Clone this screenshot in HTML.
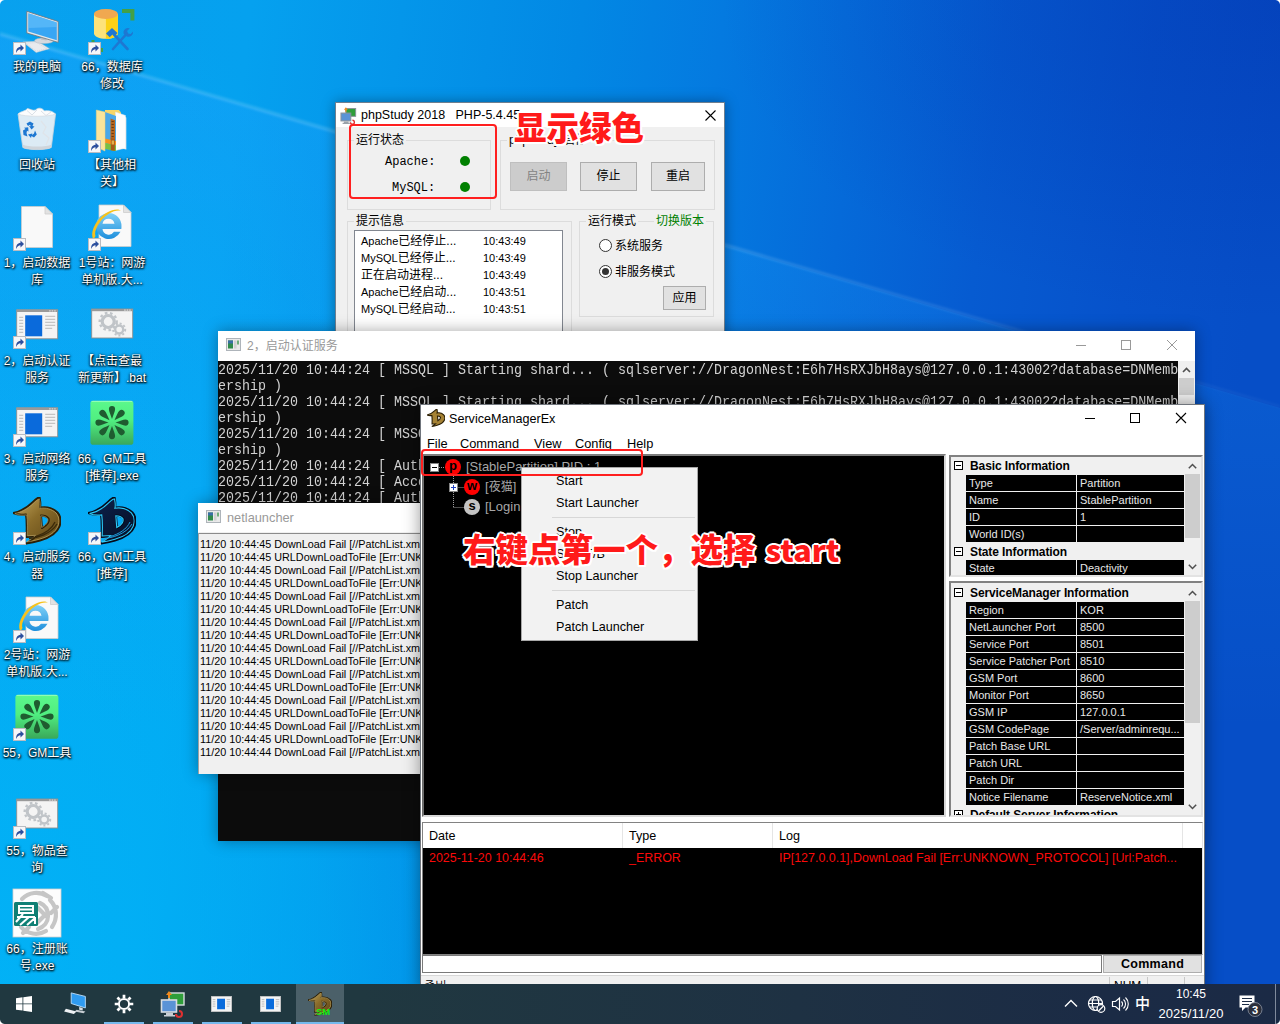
<!DOCTYPE html>
<html lang="zh-CN">
<head>
<meta charset="utf-8">
<title>Desktop</title>
<style>
*{box-sizing:border-box;margin:0;padding:0}
html,body{width:1280px;height:1024px;overflow:hidden}
body{position:relative;font-family:"Liberation Sans","Noto Sans CJK SC",sans-serif;font-size:12px;color:#000;background:#0078d7}
.abs{position:absolute}
#desk{position:absolute;left:0;top:0;width:1280px;height:1024px;overflow:hidden;
background:
radial-gradient(ellipse 560px 320px at 100% 0%,rgba(2,48,170,.38),rgba(2,48,170,0) 100%),
radial-gradient(ellipse 640px 1250px at 0% 100%,rgba(0,182,248,.8),rgba(0,182,248,.45) 50%,rgba(0,182,248,0) 85%),
linear-gradient(97deg,#08a0ee 0px,#05a1ef 250px,#0496ea 400px,#0288e4 580px,#047ae0 720px,#056ad9 860px,#065bd1 1000px,#0652cb 1150px,#064ec7 1280px);}
#desk .ray{position:absolute;left:0;top:0;width:1280px;height:1024px}
/* desktop icons */
.ico{position:absolute;width:76px;height:96px}
.ico svg{position:absolute;left:14px;top:0;width:48px;height:48px;overflow:visible}
.ico .lb{position:absolute;left:-6px;width:88px;top:52px;text-align:center;color:#fff;font-size:12px;line-height:17px;
font-family:"Liberation Sans","Noto Sans CJK SC",sans-serif;
text-shadow:0 1px 2px rgba(0,0,0,.95),1px 1px 2px rgba(0,0,0,.8),0 0 3px rgba(0,0,0,.7);white-space:nowrap}
/* taskbar */
#tb{position:absolute;left:0;top:984px;width:1280px;height:40px;background:linear-gradient(to right,#203840 0,#203840 360px,#1e3143 800px,#1b2b45 1100px,#1b2a45 1280px)}
#tb .act{position:absolute;left:296px;top:0;width:48px;height:40px;background:#4b6069}
#tb .ul{position:absolute;top:38px;height:2px;background:#76b9ed}
#tb .tray{color:#fff;font-size:12px;position:absolute}
/* windows generic */
.win{position:absolute;background:#fff}
.ttl{position:absolute;font-size:12px;white-space:nowrap}
.bigred{font-family:"Noto Sans CJK SC","Liberation Sans",sans-serif;font-weight:900;color:#ff1a1a;white-space:nowrap;-webkit-text-stroke:0;text-shadow:-2px 0 0 #fff,2px 0 0 #fff,0 -2px 0 #fff,0 2px 0 #fff,-1.500px -1.500px 0 #fff,1.500px -1.500px 0 #fff,-1.500px 1.500px 0 #fff,1.500px 1.500px 0 #fff}
.mono{font-family:"Liberation Mono","Noto Sans Mono CJK SC",monospace}
</style>
</head>
<body>
<div id="desk">
<svg class="ray" viewBox="0 0 1280 1024">
<defs><filter id="bl" x="-5%" y="-5%" width="110%" height="110%"><feGaussianBlur stdDeviation="1.200"/></filter>
<linearGradient id="rg1" x1="0" y1="0" x2="1" y2="0"><stop offset="0" stop-color="#bfe9ff" stop-opacity=".2"/><stop offset=".5" stop-color="#bfe9ff" stop-opacity=".2"/><stop offset="1" stop-color="#bfe9ff" stop-opacity=".04"/></linearGradient>
<linearGradient id="rg2" x1="0" y1="0" x2="0" y2="1"><stop offset="0" stop-color="#1ea0ff" stop-opacity=".36"/><stop offset=".25" stop-color="#1ea0ff" stop-opacity=".2"/><stop offset=".7" stop-color="#1ea0ff" stop-opacity="0"/></linearGradient></defs>
<polygon points="0,34 1280,408 1280,1024 0,1024" fill="url(#rg2)"/>
<polygon points="0,32 1280,405 1280,408 0,36" fill="url(#rg1)" filter="url(#bl)"/>
</svg>
</div>
<!--ICONS-->
<svg width="0" height="0" style="position:absolute">
<defs>
<symbol id="sc" viewBox="0 0 13 13"><rect x=".5" y=".5" width="12" height="12" fill="#f6f7f9" stroke="#b9bcc2"/><path d="M3.300 11c-.6-3.200 1-6 4.200-6.300V2.600L11 6 7.500 9.400V7.300C5.600 7.300 4.200 8.600 3.300 11z" fill="#2c4f9e"/></symbol>
<symbol id="pc" viewBox="0 0 48 48"><path d="M10 35 24.500 34.300 36.400 41.700 23.200 45.500z" fill="#e9ebee" stroke="#c4c8cd" stroke-width=".5"/><path d="M12.500 36.200 24 35.600 33.800 41.600 23.300 44.200z" fill="none" stroke="#cfd3d8" stroke-width=".7" stroke-dasharray="1.200 .8"/><ellipse cx="31" cy="33.800" rx="9.500" ry="2.800" fill="#d5d9de" stroke="#b4b9bf" stroke-width=".5"/><path d="M28 28 33.500 29.800 33.500 33.600 28 32.500z" fill="#b9bec5"/><path d="M13.800 4.300 45.200 14.500 45.200 35.400 13.800 26z" fill="#e4e7ea" stroke="#6d7278" stroke-width=".8"/><path d="M15.300 6.300 43.800 15.600 43.800 33.300 15.300 24.600z" fill="#38a6f4"/><path d="M15.300 6.300 43.800 15.600 43.800 20 15.300 21z" fill="#6cc2fb" opacity=".55"/></symbol>
<symbol id="page" viewBox="0 0 48 48"><path d="M8.500 3.500H32L39.500 11V44.500H8.500z" fill="#f9f9f9" stroke="#cdcdcd" stroke-width=".8"/><path d="M32 3.500V11H39.500z" fill="#e2e2e2" stroke="#cdcdcd" stroke-width=".8"/></symbol>
<symbol id="ie" viewBox="0 0 48 48"><path d="M11 2H35.500L43 9.500V43.500H11z" fill="#f9f9f9" stroke="#cdcdcd" stroke-width=".8"/><path d="M35.500 2V9.500H43z" fill="#e2e2e2" stroke="#cdcdcd" stroke-width=".8"/><defs><linearGradient id="ieg" x1="0" y1="0" x2="0" y2="1"><stop offset="0" stop-color="#7fd0f7"/><stop offset="1" stop-color="#1f8fdc"/></linearGradient></defs><path d="M20.500 10a13 13 0 0 1 13 13.800c0 .9-.1 1.700-.2 2.200H14.500a6.300 6.300 0 0 0 11.500 2.800h6.500A13 13 0 1 1 20.500 10zm0 5.800a6.300 6.300 0 0 0-6 5h12a6.300 6.300 0 0 0-6-5z" fill="url(#ieg)"/><path d="M5.500 36.500C1.500 29 8 16 19 9.500c6-3.500 12-4 14.500-1.500-3-1-8-.2-13 3C11 17 5.500 28.500 7.500 33z" fill="#f7c21c"/></symbol>
<symbol id="bat" viewBox="0 0 48 48"><g transform="translate(-.8 2.300)"><rect x="4.500" y="6.500" width="41" height="29" fill="#f4f4f4" stroke="#8f8f8f" stroke-width=".9"/><rect x="4.500" y="6.500" width="41" height="2.200" fill="#9a9a9a"/><path d="M37 7.600h1.500M39.500 7.600H41M42 7.600h1.500" stroke="#e8e8e8" stroke-width="1"/><rect x="13" y="12" width="17" height="21" fill="#0a6adb"/><path d="M7 14h4M7 17h4M7 20h4M7 23h4M7 26h4M7 29h4M33 13h10M33 16h10M33 19h10M33 22h10M33 25h7" stroke="#b9b9b9" stroke-width="1"/></g></symbol>
<symbol id="gears" viewBox="0 0 48 48"><g transform="translate(-.8 2.500)"><rect x="4.500" y="5.500" width="41" height="29" fill="#f4f4f4" stroke="#8f8f8f" stroke-width=".9"/><rect x="4.500" y="5.500" width="41" height="2.200" fill="#9a9a9a"/><path d="M37 6.600h1.500M39.500 6.600H41M42 6.600h1.500" stroke="#e8e8e8" stroke-width="1"/><circle cx="21" cy="18" r="6" fill="none" stroke="#c0c4c8" stroke-width="3.200"/><circle cx="21" cy="18" r="8.500" fill="none" stroke="#c0c4c8" stroke-width="2.400" stroke-dasharray="2.600 2.600"/><circle cx="32" cy="26" r="4" fill="none" stroke="#c0c4c8" stroke-width="2.400"/><circle cx="32" cy="26" r="6" fill="none" stroke="#c0c4c8" stroke-width="2" stroke-dasharray="2 2"/></g></symbol>
<symbol id="icq" viewBox="0 0 48 48"><defs><linearGradient id="gq" x1="0" y1="0" x2="0" y2="1"><stop offset="0" stop-color="#5cf88c"/><stop offset=".45" stop-color="#50ee80"/><stop offset="1" stop-color="#3aa85a"/></linearGradient></defs><rect x="2.400" y="1.700" width="43" height="44" rx="2.800" fill="url(#gq)"/><rect x="3.500" y="1.900" width="40.800" height="1" fill="#a8ffc4" opacity=".8"/><g fill="#1f5c30" transform="translate(24 23.600)"><path d="M0-3.500C-1.400-8-3.100-11-3.100-13.500A3.100 3.100 0 0 1 3.100-13.500C3.100-11 1.400-8 0-3.500Z" transform="rotate(0)"/><path d="M0-3.500C-1.400-8-3.100-11-3.100-13.500A3.100 3.100 0 0 1 3.100-13.500C3.100-11 1.400-8 0-3.500Z" transform="rotate(45)"/><path d="M0-3.500C-1.400-8-3.100-11-3.100-13.500A3.100 3.100 0 0 1 3.100-13.500C3.100-11 1.400-8 0-3.500Z" transform="rotate(90)"/><path d="M0-3.500C-1.400-8-3.100-11-3.100-13.500A3.100 3.100 0 0 1 3.100-13.500C3.100-11 1.400-8 0-3.500Z" transform="rotate(135)"/><path d="M0-3.500C-1.400-8-3.100-11-3.100-13.500A3.100 3.100 0 0 1 3.100-13.500C3.100-11 1.400-8 0-3.500Z" transform="rotate(180)"/><path d="M0-3.500C-1.400-8-3.100-11-3.100-13.500A3.100 3.100 0 0 1 3.100-13.500C3.100-11 1.400-8 0-3.500Z" transform="rotate(225)"/><path d="M0-3.500C-1.400-8-3.100-11-3.100-13.500A3.100 3.100 0 0 1 3.100-13.500C3.100-11 1.400-8 0-3.500Z" transform="rotate(270)"/><path d="M0-3.500C-1.400-8-3.100-11-3.100-13.500A3.100 3.100 0 0 1 3.100-13.500C3.100-11 1.400-8 0-3.500Z" transform="rotate(315)"/></g></symbol>
<symbol id="drg" viewBox="0 0 48 48"><path fill-rule="evenodd" d="M0 16C6 15 14 11 20 5 22 3 24.500 1 26.500 0 27 3 28 7 27 10.500 33 9.500 40 11 44.500 15.500 47.500 19 48.500 24 46.500 29.500 44 36 36 41 27 43.500 22 45 17 46 13 46.500 17 44 20 42 22.500 39.500L13.500 40C13.800 33 14 24 13 17.500 9 18 4 18 0 16ZM28 18.500C31 18.500 34 19.500 35.500 21.500 36.500 24 35 28 29 31Z"/></symbol>
<symbol id="drgl" viewBox="0 0 48 48"><path fill="none" d="M22.500 39.500C31 37 39 32 42 25M16 41.500C24 41 38 37 44 27"/></symbol>
<linearGradient id="gold" x1="0" y1="0" x2="1" y2="1"><stop offset="0" stop-color="#c8ab62"/><stop offset=".45" stop-color="#8a6c2a"/><stop offset="1" stop-color="#5a4214"/></linearGradient>
<linearGradient id="navy" x1="0" y1="0" x2="1" y2="1"><stop offset="0" stop-color="#0c2450"/><stop offset="1" stop-color="#060d22"/></linearGradient>
</defs>
</svg>
<!-- col1 x=-1 (center 37) ; col2 x=74 (center 112); row top = 7+98*i -->
<div class="ico" style="left:-1px;top:7px"><svg viewBox="0 0 48 48"><use href="#pc"/><use href="#sc" x="0" y="35" width="13" height="13"/></svg><div class="lb">我的电脑</div></div>
<div class="ico" style="left:74px;top:7px"><svg viewBox="0 0 48 48"><path d="M34 2h12.400v11.600h-4V6H34z" fill="#43a047"/><path d="M6 7v19.500c0 3 5.300 5.300 11.900 5.300s11.900-2.300 11.900-5.300V7z" fill="#fde27a"/><path d="M17.900 7v24.800c6.600 0 11.900-2.300 11.900-5.300V7z" fill="#fcd116"/><ellipse cx="17.900" cy="7" rx="11.900" ry="5" fill="#f0a850"/><g stroke="#1e78d2" stroke-linecap="round" fill="none"><path d="M25 42 37.500 28" stroke-width="2.600"/><path d="M39.500 42 26 27.500" stroke-width="2.600"/></g><path d="M18 26.500l6-5.500 5.500 5-3 3.200-2-1.600-2.800 2.600z" fill="#1e78d2"/><path d="M35.500 26.500a4.600 4.600 0 0 1 6.300-5.200l-2.700 2.800 1 2.300 2.500.6 2.400-2.600a4.600 4.600 0 0 1-6.200 5.100z" fill="#1e78d2"/><rect x="3.500" y="33" width="3" height="3" fill="#43a047"/><rect x="12.500" y="41" width="2.500" height="4" fill="#43a047"/><use href="#sc" x="0" y="35" width="13" height="13"/></svg><div class="lb">66，数据库<br>修改</div></div>
<div class="ico" style="left:-1px;top:105px"><svg viewBox="0 0 48 48"><path d="M5 9 42.600 9 38.300 42.500c-4 2.800-24 2.800-28.500 0z" fill="#eef1f4" fill-opacity=".92" stroke="#c9d3dc" stroke-width=".8"/><path d="M5 9c3-3 7-2.500 9.500-5.500 3 .5 5 2.500 8 1.500 3-3 7-2 9 1 4-1 8 0 11 3-6 3-31 3-37.500 0z" fill="#fbfcfd" stroke="#d5dbe1" stroke-width=".7"/><path d="M14 5.500 19 10 24 5M28 6 33 10.500 38 7" fill="none" stroke="#d7dde3" stroke-width=".9"/><path d="M9.800 39.500c4.500 2.800 24.500 2.800 28.500 0l-.4 3c-4 2.800-23.700 2.800-27.700 0z" fill="#cfd5db"/><path d="M28 16 33 22 30 28 36 33 33 40" fill="none" stroke="#dfe4e9" stroke-width="1.200"/><g fill="#1e78d2"><path d="M13.500 18.500 17 16.500 20.500 18.500 19.500 21 21.500 21.500 18.500 24.500 16 21 17.800 21.200 17 19.800 15 21z"/><path d="M22 25.500 23.800 29.500 21 32.500 18.500 31 18 33 15 29.500 19.300 28.500 19.200 30 21 28.500z" /><path d="M14.500 31.500 10.500 30 10 25.500 12.500 24 11 22.800 15.200 22.300 15.500 26.500 14 25.800 13.500 28z"/></g></svg><div class="lb">回收站</div></div>
<div class="ico" style="left:74px;top:105px"><svg viewBox="0 0 48 48"><path d="M17 5h14l2 2.500h0V12H17z" fill="#f7d567"/><path d="M31.500 10 38.300 12.500V44.500L31.500 43z" fill="#f2f2f2"/><path d="M27.500 7 37.500 10.500V43L27.500 45.500z" fill="#fdfdfd" stroke="#e6e6e6" stroke-width=".5"/><path d="M17 7 28 11V46L17 44z" fill="#4aa8e8"/><path d="M22.500 13.500 27 15.200V46L22.500 45.200z" fill="#b5651d"/><path d="M23.500 16.500h2.300M23.500 19.500h2.300M23.500 22.500h2.300M23.500 25.500h2.300M23.500 28.500h2.300M23.500 31.500h2.300" stroke="#6b3a0e" stroke-width="1.200"/><path d="M17 33.500 28 36v4.500L17 38z" fill="#f5921e"/><path d="M17 38 28 40.500V46L17 44z" fill="#7ac043"/><path d="M22.800 33 26.800 34V45.800L22.800 45z" fill="#a85a18"/><rect x="23.600" y="35.500" width="2.400" height="4" fill="#e2b04a"/><path d="M8.300 5 17 7V46L8.300 42z" fill="#fbe49a" stroke="#efd27a" stroke-width=".5"/><use href="#sc" x="0" y="35" width="13" height="13"/></svg><div class="lb">【其他相<br>关】</div></div>
<div class="ico" style="left:-1px;top:203px"><svg viewBox="0 0 48 48"><use href="#page"/><use href="#sc" x="0" y="35" width="13" height="13"/></svg><div class="lb">1，启动数据<br>库</div></div>
<div class="ico" style="left:74px;top:203px"><svg viewBox="0 0 48 48"><use href="#ie"/><use href="#sc" x="0" y="35" width="13" height="13"/></svg><div class="lb">1号站：网游<br>单机版.大...</div></div>
<div class="ico" style="left:-1px;top:301px"><svg viewBox="0 0 48 48"><use href="#bat"/><use href="#sc" x="0" y="35" width="13" height="13"/></svg><div class="lb">2，启动认证<br>服务</div></div>
<div class="ico" style="left:74px;top:301px"><svg viewBox="0 0 48 48"><use href="#gears"/></svg><div class="lb">【点击查最<br>新更新】.bat</div></div>
<div class="ico" style="left:-1px;top:399px"><svg viewBox="0 0 48 48"><use href="#bat"/><use href="#sc" x="0" y="35" width="13" height="13"/></svg><div class="lb">3，启动网络<br>服务</div></div>
<div class="ico" style="left:74px;top:399px"><svg viewBox="0 0 48 48"><use href="#icq"/></svg><div class="lb">66，GM工具<br>[推荐].exe</div></div>
<div class="ico" style="left:-1px;top:497px"><svg viewBox="0 0 48 48"><use href="#drg" fill="url(#gold)" stroke="#2c1f06" stroke-width="2" stroke-linejoin="round"/><use href="#drg" fill="none" stroke="#e0c680" stroke-width=".7" opacity=".8" transform="translate(1.700 1.600) scale(.93)"/><use href="#drgl" stroke="#3a2a0a" stroke-width="1.300"/><use href="#sc" x="0" y="35" width="13" height="13"/></svg><div class="lb">4，启动服务<br>器</div></div>
<div class="ico" style="left:74px;top:497px"><svg viewBox="0 0 48 48"><use href="#drg" fill="url(#navy)" stroke="#050a1a" stroke-width="2" stroke-linejoin="round"/><use href="#drg" fill="none" stroke="#2cc8f6" stroke-width="1.200" transform="translate(1.500 1.400) scale(.94)"/><use href="#drgl" stroke="#1f9fe0" stroke-width="1"/><use href="#sc" x="0" y="35" width="13" height="13"/></svg><div class="lb">66，GM工具<br>[推荐]</div></div>
<div class="ico" style="left:-1px;top:595px"><svg viewBox="0 0 48 48"><use href="#ie" x="2"/><use href="#sc" x="0" y="35" width="13" height="13"/></svg><div class="lb">2号站：网游<br>单机版.大...</div></div>
<div class="ico" style="left:-1px;top:693px"><svg viewBox="0 0 48 48"><use href="#icq"/><use href="#sc" x="0" y="35" width="13" height="13"/></svg><div class="lb">55，GM工具</div></div>
<div class="ico" style="left:-1px;top:791px"><svg viewBox="0 0 48 48"><use href="#gears"/><use href="#sc" x="0" y="35" width="13" height="13"/></svg><div class="lb">55，物品查<br>询</div></div>
<div class="ico" style="left:-1px;top:889px"><svg viewBox="0 0 48 48"><rect x="0" y="0" width="48" height="48" fill="#fdfdfd" stroke="#d0d0d0" stroke-width=".8"/><g fill="none" stroke="#c6c6c6" stroke-width="4.200" stroke-linecap="round"><path d="M9 10c7-7 17-8 25-3M30 4l8 5M37 11c7 7 8 18 2 27M44 18l-6 6M33 42c-8 5-19 3-25-4M10 44l6-6M27 14c5 2 8 7 8 13s-4 11-10 13M24 18l8 8-8 8"/></g><rect x="1" y="13" width="24" height="24" rx="1.500" fill="#0f7f74"/><g stroke="#fff" stroke-width="2" fill="none"><path d="M6 17h14v7H6zM6 20.500h14M4 28h18M10 25 3 33M16 28 7 36M22 29 14 36M22 28v7"/></g></svg><div class="lb">66，注册账<br>号.exe</div></div>
<!--/ICONS-->
<!--PHPSTUDY-->
<style>
#php{left:335px;top:102px;width:390px;height:240px;background:#f0f0f0;border:1px solid #6f7f8f;box-shadow:0 0 12px rgba(0,0,0,.35)}
#php .tbar{position:absolute;left:0;top:0;width:388px;height:24px;background:#fff}
#php .gb{position:absolute;border:1px solid #dcdcdc}
#php .gl{position:absolute;background:#f0f0f0;padding:0 2px;font-size:12px;line-height:14px;white-space:nowrap}
#php .btn{position:absolute;background:#e1e1e1;border:1px solid #adadad;text-align:center;font-size:12px}
#php .t{position:absolute;white-space:nowrap;font-size:12px;line-height:14px}
#php .sm{font-family:"Liberation Sans","Noto Sans CJK SC",sans-serif;font-size:12px}
#php .sm i{font-style:normal;font-size:11px}
.song{font-family:"Liberation Mono","Noto Serif CJK SC",monospace}
</style>
<div class="win" id="php">
<div class="tbar"></div>
<svg class="abs" style="left:4px;top:4px" width="17" height="18" viewBox="0 0 26 27"><rect x="9" y="2" width="15" height="12" fill="#2f9e3a" stroke="#8a9299" stroke-width="1.400"/><rect x="1.500" y="9" width="15" height="12" fill="#5a93d6" stroke="#8a9299" stroke-width="1.600"/><path d="M6 22h7v2H6zM4 24h11v1.600H4z" fill="#9aa2a9"/><path d="M9 0l-3 4h2v3h2V4h2z" fill="#f08a1c"/><path d="M19 19a4 4 0 1 1-4 4h2a2 2 0 1 0 2-2z" fill="#e03030"/></svg>
<div class="ttl" style="left:25px;top:5px;line-height:15px;font-size:12.500px;white-space:pre">phpStudy 2018   PHP-5.4.45</div>
<svg class="abs" style="left:369px;top:7px" width="11" height="11" viewBox="0 0 11 11"><path d="M.5.5l10 10M10.500.5l-10 10" stroke="#000" stroke-width="1.100"/></svg>
<!-- group 1 -->
<div class="gb" style="left:11px;top:37px;width:144px;height:70px"></div>
<div class="gl" style="left:18px;top:30px">运行状态</div>
<div class="t song" style="left:49px;top:52px">Apache:</div>
<div class="t song" style="left:56px;top:78px">MySQL:</div>
<div class="abs" style="left:124px;top:53px;width:10px;height:10px;border-radius:50%;background:#008000"></div>
<div class="abs" style="left:124px;top:79px;width:10px;height:10px;border-radius:50%;background:#008000"></div>
<!-- group 2 -->
<div class="gb" style="left:164px;top:37px;width:215px;height:70px"></div>
<div class="gl" style="left:171px;top:30px">phpStudy 启停</div>
<div class="btn" style="left:174px;top:59px;width:57px;height:29px;line-height:27px;background:#cccccc;border-color:#bfbfbf;color:#838383">启动</div>
<div class="btn" style="left:244px;top:59px;width:57px;height:29px;line-height:27px">停止</div>
<div class="btn" style="left:315px;top:59px;width:54px;height:29px;line-height:27px">重启</div>
<!-- group 3 -->
<div class="gb" style="left:11px;top:118px;width:225px;height:130px"></div>
<div class="gl" style="left:18px;top:111px">提示信息</div>
<div class="abs" style="left:18px;top:127px;width:209px;height:120px;background:#fff;border:1px solid #828790"></div>
<div class="t sm" style="left:25px;top:131px"><i>Apache</i>已经停止...</div><div class="t sm" style="left:147px;top:131px"><i>10:43:49</i></div>
<div class="t sm" style="left:25px;top:148px"><i>MySQL</i>已经停止...</div><div class="t sm" style="left:147px;top:148px"><i>10:43:49</i></div>
<div class="t sm" style="left:25px;top:165px">正在启动进程...</div><div class="t sm" style="left:147px;top:165px"><i>10:43:49</i></div>
<div class="t sm" style="left:25px;top:182px"><i>Apache</i>已经启动...</div><div class="t sm" style="left:147px;top:182px"><i>10:43:51</i></div>
<div class="t sm" style="left:25px;top:199px"><i>MySQL</i>已经启动...</div><div class="t sm" style="left:147px;top:199px"><i>10:43:51</i></div>
<!-- group 4 -->
<div class="gb" style="left:243px;top:118px;width:135px;height:96px"></div>
<div class="gl" style="left:250px;top:111px">运行模式</div>
<div class="gl" style="left:318px;top:111px;color:#008000">切换版本</div>
<div class="abs" style="left:263px;top:136px;width:13px;height:13px;border-radius:50%;border:1px solid #333;background:#fff"></div>
<div class="t" style="left:279px;top:136px">系统服务</div>
<div class="abs" style="left:263px;top:162px;width:13px;height:13px;border-radius:50%;border:1px solid #333;background:#fff"></div>
<div class="abs" style="left:266px;top:165px;width:7px;height:7px;border-radius:50%;background:#333"></div>
<div class="t" style="left:279px;top:162px">非服务模式</div>
<div class="btn" style="left:327px;top:183px;width:43px;height:24px;line-height:22px">应用</div>
<!-- annotations -->
<div class="abs" style="left:13px;top:21px;width:148px;height:75px;border:2px solid #ff1f1f;border-radius:4px"></div>
</div>
<div class="abs bigred" style="left:514px;top:104px;font-size:32.500px;line-height:44px">显示绿色</div>
<!--/PHPSTUDY-->
<!--CONSOLE-->
<style>
#con{left:218px;top:331px;width:977px;height:510px;background:#0c0c0c;box-shadow:0 0 14px rgba(0,0,0,.35)}
#con .tbar{position:absolute;left:0;top:0;width:977px;height:30px;background:#fff}
#con .ln{position:absolute;left:0;height:16px;font-size:15px;line-height:16px;white-space:pre;color:#d2d2d2;transform-origin:0 0;transform:scaleX(.88889)}
.cico{position:absolute;width:15px;height:13px}
</style>
<div class="win" id="con">
<div class="tbar"></div>
<svg class="cico" style="left:8px;top:7px" viewBox="0 0 15 13"><rect x=".5" y=".5" width="14" height="12" fill="#e9e9e9" stroke="#aeb4ba"/><rect x="2" y="2.500" width="5" height="8" fill="#2f8a4a"/><rect x="2" y="2.500" width="5" height="3" fill="#3a6ea5"/><rect x="8" y="2.500" width="2.500" height="8" fill="#d0d0d0"/><rect x="11" y="2.500" width="2" height="4" fill="#6fae7a"/></svg>
<div class="ttl" style="left:29px;top:7px;line-height:16px;color:#999">2，启动认证服务</div>
<svg class="abs" style="left:857px;top:8px" width="12" height="12" viewBox="0 0 12 12"><path d="M1 6.500h10" stroke="#999" stroke-width="1"/></svg>
<svg class="abs" style="left:902px;top:8px" width="12" height="12" viewBox="0 0 12 12"><rect x="1.500" y="1.500" width="9" height="9" fill="none" stroke="#999" stroke-width="1"/></svg>
<svg class="abs" style="left:948px;top:8px" width="12" height="12" viewBox="0 0 12 12"><path d="M1 1l10 10M11 1 1 11" stroke="#999" stroke-width="1"/></svg>
<div class="ln mono" style="top:32px">2025/11/20 10:44:24 [ MSSQL ] Starting shard... ( sqlserver://DragonNest:E6h7HsRXJbH8ays@127.0.0.1:43002?database=DNMemb</div>
<div class="ln mono" style="top:48px">ership )</div>
<div class="ln mono" style="top:64px">2025/11/20 10:44:24 [ MSSQL ] Starting shard... ( sqlserver://DragonNest:E6h7HsRXJbH8ays@127.0.0.1:43002?database=DNMemb</div>
<div class="ln mono" style="top:80px">ership )</div>
<div class="ln mono" style="top:96px">2025/11/20 10:44:24 [ MSSQL ] Starting shard... ( sqlserver://DragonNest:E6h7HsRXJbH8ays@127.0.0.1:43002?database=DNMemb</div>
<div class="ln mono" style="top:112px">ership )</div>
<div class="ln mono" style="top:128px">2025/11/20 10:44:24 [ Auth ] Authentication service ready</div>
<div class="ln mono" style="top:144px">2025/11/20 10:44:24 [ Account ] Account database connected</div>
<div class="ln mono" style="top:160px">2025/11/20 10:44:24 [ Auth ] Listening for connections</div>
<!-- scrollbar -->
<div class="abs" style="left:960px;top:30px;width:17px;height:480px;background:#f0f0f0"></div>
<svg class="abs" style="left:964px;top:35px" width="9" height="8" viewBox="0 0 9 8"><path d="M1 6 4.500 2.500 8 6" fill="none" stroke="#505050" stroke-width="1.600"/></svg>
<div class="abs" style="left:961px;top:47px;width:15px;height:17px;background:#cdcdcd"></div>
</div>
<!--/CONSOLE-->
<!--NETLAUNCHER-->
<style>
#net{left:198px;top:503px;width:231px;height:271px;background:#f0f0f0;overflow:hidden;box-shadow:0 0 14px rgba(0,0,0,.35)}
#net .tbar{position:absolute;left:0;top:0;width:230px;height:29px;background:#fff}
#net .ln{position:absolute;left:2px;font-size:10.800px;line-height:13px;white-space:pre;color:#000}
</style>
<div class="win" id="net">
<div class="tbar"></div>
<svg class="cico" style="left:8px;top:7px" viewBox="0 0 15 13"><rect x=".5" y=".5" width="14" height="12" fill="#e9e9e9" stroke="#aeb4ba"/><rect x="2" y="2.500" width="5" height="8" fill="#2f8a4a"/><rect x="2" y="2.500" width="5" height="3" fill="#3a6ea5"/><rect x="8" y="2.500" width="2.500" height="8" fill="#d0d0d0"/><rect x="11" y="2.500" width="2" height="4" fill="#6fae7a"/></svg>
<div class="ttl" style="left:29px;top:7px;line-height:16px;color:#999;font-size:12.800px">netlauncher</div>
<div class="abs" style="left:0;top:30px;width:230px;height:1px;background:#8c8c8c"></div>
<div class="abs" style="left:0;top:30px;width:1px;height:241px;background:#a0a0a0"></div>
<div class="ln" style="top:35px">11/20 10:44:45 DownLoad Fail [//PatchList.xml]</div>
<div class="ln" style="top:48px">11/20 10:44:45 URLDownLoadToFile [Err:UNKNOWN_PROTOCOL]</div>
<div class="ln" style="top:61px">11/20 10:44:45 DownLoad Fail [//PatchList.xml]</div>
<div class="ln" style="top:74px">11/20 10:44:45 URLDownLoadToFile [Err:UNKNOWN_PROTOCOL]</div>
<div class="ln" style="top:87px">11/20 10:44:45 DownLoad Fail [//PatchList.xml]</div>
<div class="ln" style="top:100px">11/20 10:44:45 URLDownLoadToFile [Err:UNKNOWN_PROTOCOL]</div>
<div class="ln" style="top:113px">11/20 10:44:45 DownLoad Fail [//PatchList.xml]</div>
<div class="ln" style="top:126px">11/20 10:44:45 URLDownLoadToFile [Err:UNKNOWN_PROTOCOL]</div>
<div class="ln" style="top:139px">11/20 10:44:45 DownLoad Fail [//PatchList.xml]</div>
<div class="ln" style="top:152px">11/20 10:44:45 URLDownLoadToFile [Err:UNKNOWN_PROTOCOL]</div>
<div class="ln" style="top:165px">11/20 10:44:45 DownLoad Fail [//PatchList.xml]</div>
<div class="ln" style="top:178px">11/20 10:44:45 URLDownLoadToFile [Err:UNKNOWN_PROTOCOL]</div>
<div class="ln" style="top:191px">11/20 10:44:45 DownLoad Fail [//PatchList.xml]</div>
<div class="ln" style="top:204px">11/20 10:44:45 URLDownLoadToFile [Err:UNKNOWN_PROTOCOL]</div>
<div class="ln" style="top:217px">11/20 10:44:45 DownLoad Fail [//PatchList.xml]</div>
<div class="ln" style="top:230px">11/20 10:44:45 URLDownLoadToFile [Err:UNKNOWN_PROTOCOL]</div>
<div class="ln" style="top:243px">11/20 10:44:44 DownLoad Fail [//PatchList.xml]</div>
</div>
<!--/NETLAUNCHER-->
<!--SMEX-->
<style>
#sm{left:420px;top:404px;width:785px;height:590px;background:#fff;box-shadow:0 0 16px rgba(0,0,0,.4);overflow:hidden}
#sm .mi{position:absolute;top:31px;font-size:12.800px;line-height:18px;white-space:nowrap}
#sm .pan{position:absolute;background:#f0f0f0;border:2px solid;border-color:#828282 #e3e3e3 #e3e3e3 #828282;overflow:hidden}
#sm .pan2{position:absolute;background:#f0f0f0;overflow:hidden}
#sm .ph{position:absolute;left:19px;height:17px;line-height:19px;font-size:12px;font-weight:700;white-space:nowrap;letter-spacing:-.1px}
#sm .pn,#sm .pv{position:absolute;height:16px;line-height:17px;font-size:11px;color:#e8e8e8;background:#000;white-space:nowrap;overflow:hidden;padding-left:3px}
#sm .pn{left:15px;width:110px}
#sm .pv{left:126px;width:107px}
#sm .sb{position:absolute;left:233px;top:0;width:17px;background:#f0f0f0}
#sm .th{position:absolute;left:234px;width:15px;background:#cdcdcd}
#sm .tr{position:absolute;font-size:13px;line-height:18px;white-space:nowrap}
#sm .cm{position:absolute;left:136px;font-size:12.600px;line-height:18px;white-space:nowrap;color:#000}
#sm .lh{position:absolute;top:421px;height:23px;line-height:23px;font-size:12.600px;white-space:nowrap}
#sm .lr{position:absolute;top:445px;line-height:18px;font-size:12.450px;color:#fa0a0a;white-space:nowrap}
</style>
<div class="win" id="sm">
<div class="abs" style="left:0;top:0;width:785px;height:590px;border:1px solid #70757c;border-bottom:0"></div>
<svg class="abs" style="left:7px;top:5px" width="18" height="18" viewBox="0 0 48 48"><use href="#drg" fill="#a58234" stroke="#2a1e05" stroke-width="3"/></svg>
<div class="ttl" style="left:29px;top:7px;line-height:17px;font-size:12.600px">ServiceManagerEx</div>
<svg class="abs" style="left:664px;top:8px" width="12" height="12" viewBox="0 0 12 12"><path d="M1 6.500h10" stroke="#000" stroke-width="1"/></svg>
<svg class="abs" style="left:709px;top:8px" width="12" height="12" viewBox="0 0 12 12"><rect x="1.500" y="1.500" width="9" height="9" fill="none" stroke="#000" stroke-width="1"/></svg>
<svg class="abs" style="left:755px;top:8px" width="12" height="12" viewBox="0 0 12 12"><path d="M1 1l10 10M11 1 1 11" stroke="#000" stroke-width="1.100"/></svg>
<div class="mi" style="left:7px">File</div><div class="mi" style="left:40px">Command</div><div class="mi" style="left:114px">View</div><div class="mi" style="left:155px">Config</div><div class="mi" style="left:207px">Help</div>
<!-- tree -->
<div class="pan" style="left:2px;top:50px;width:524px;height:363px;background:#000;border-color:#7c7c7c #d8d8d8 #d8d8d8 #6e6e6e"></div>
<svg class="abs" style="left:10px;top:59px" width="60" height="60" viewBox="0 0 60 60"><g stroke="#9a9a9a" stroke-dasharray="1 1" fill="none"><path d="M9 4.500h10M23.500 13v32M23.500 24.500h22M23.500 44.500h22"/></g><rect x=".5" y=".5" width="8" height="8" fill="#fff" stroke="#848484"/><path d="M2 4.500h5" stroke="#000"/><rect x="19.500" y="20.500" width="8" height="8" fill="#fff" stroke="#848484"/><path d="M21 24.500h5M23.500 22v5" stroke="#2040c0"/></svg>
<div class="abs" style="left:25px;top:55px;width:16px;height:16px;border-radius:50%;background:#ff0000"></div>
<div class="abs" style="left:25px;top:54px;width:16px;height:16px;text-align:center;font-weight:700;font-size:13px;line-height:16px;color:#000">p</div>
<div class="abs" style="left:44px;top:75px;width:16px;height:16px;border-radius:50%;background:#ff0000"></div>
<div class="abs" style="left:44px;top:74px;width:16px;height:16px;text-align:center;font-weight:700;font-size:13px;line-height:16px;color:#000">w</div>
<div class="abs" style="left:44px;top:95px;width:16px;height:16px;border-radius:50%;background:#c4c4c4"></div>
<div class="abs" style="left:44px;top:94px;width:16px;height:16px;text-align:center;font-weight:700;font-size:13px;line-height:16px;color:#000">s</div>
<div class="tr" style="left:46px;top:54px;color:#a6a6a6">[StablePartition] PID : 1</div>
<div class="tr" style="left:65px;top:74px;color:#a6a6a6">[<span style="font-size:12px">夜猫</span>]</div>
<div class="tr" style="left:65px;top:94px;color:#a6a6a6">[LoginServer]</div>
<!-- props -->
<div class="pan" style="left:529px;top:51px;width:254px;height:122px"><div class="pan2" style="left:0;top:0;width:250px;height:118px"><svg class="abs" style="left:3px;top:4px" width="9" height="9" viewBox="0 0 9 9"><rect x=".5" y=".5" width="8" height="8" fill="#fff" stroke="#000"/><path d="M2 4.500h5" stroke="#000"/></svg><div class="ph" style="top:0px">Basic Information</div><div class="pn" style="top:18px">Type</div><div class="pv" style="top:18px">Partition</div><div class="pn" style="top:35px">Name</div><div class="pv" style="top:35px">StablePartition</div><div class="pn" style="top:52px">ID</div><div class="pv" style="top:52px">1</div><div class="pn" style="top:69px">World ID(s)</div><div class="pv" style="top:69px"></div><svg class="abs" style="left:3px;top:90px" width="9" height="9" viewBox="0 0 9 9"><rect x=".5" y=".5" width="8" height="8" fill="#fff" stroke="#000"/><path d="M2 4.500h5" stroke="#000"/></svg><div class="ph" style="top:86px">State Information</div><div class="pn" style="top:103px">State</div><div class="pv" style="top:103px">Deactivity</div><div class="sb" style="height:118px"></div><svg class="abs" style="left:237px;top:6px" width="9" height="6" viewBox="0 0 9 6"><path d="M.8 5.200 4.500 1.500 8.200 5.200" fill="none" stroke="#505050" stroke-width="1.500"/></svg><svg class="abs" style="left:237px;top:107px" width="9" height="6" viewBox="0 0 9 6"><path d="M.8 .8 4.500 4.500 8.200 .8" fill="none" stroke="#505050" stroke-width="1.500"/></svg><div class="th" style="top:17px;height:64px"></div></div></div>
<div class="pan" style="left:529px;top:177px;width:254px;height:236px"><div class="pan2" style="left:0;top:1px;width:250px;height:232px"><svg class="abs" style="left:3px;top:4px" width="9" height="9" viewBox="0 0 9 9"><rect x=".5" y=".5" width="8" height="8" fill="#fff" stroke="#000"/><path d="M2 4.500h5" stroke="#000"/></svg><div class="ph" style="top:0px">ServiceManager Information</div><div class="pn" style="top:18px">Region</div><div class="pv" style="top:18px">KOR</div><div class="pn" style="top:35px">NetLauncher Port</div><div class="pv" style="top:35px">8500</div><div class="pn" style="top:52px">Service Port</div><div class="pv" style="top:52px">8501</div><div class="pn" style="top:69px">Service Patcher Port</div><div class="pv" style="top:69px">8510</div><div class="pn" style="top:86px">GSM Port</div><div class="pv" style="top:86px">8600</div><div class="pn" style="top:103px">Monitor Port</div><div class="pv" style="top:103px">8650</div><div class="pn" style="top:120px">GSM IP</div><div class="pv" style="top:120px">127.0.0.1</div><div class="pn" style="top:137px">GSM CodePage</div><div class="pv" style="top:137px">/Server/adminrequ...</div><div class="pn" style="top:154px">Patch Base URL</div><div class="pv" style="top:154px"></div><div class="pn" style="top:171px">Patch URL</div><div class="pv" style="top:171px"></div><div class="pn" style="top:188px">Patch Dir</div><div class="pv" style="top:188px"></div><div class="pn" style="top:205px">Notice Filename</div><div class="pv" style="top:205px">ReserveNotice.xml</div><svg class="abs" style="left:3px;top:226px" width="9" height="9" viewBox="0 0 9 9"><rect x=".5" y=".5" width="8" height="8" fill="#fff" stroke="#000"/><path d="M2 4.500h5M4.500 2v5" stroke="#000"/></svg><div class="ph" style="top:222px">Default Server Information</div><div class="sb" style="height:231px"></div><svg class="abs" style="left:237px;top:6px" width="9" height="6" viewBox="0 0 9 6"><path d="M.8 5.200 4.500 1.500 8.200 5.200" fill="none" stroke="#505050" stroke-width="1.500"/></svg><svg class="abs" style="left:237px;top:220px" width="9" height="6" viewBox="0 0 9 6"><path d="M.8 .8 4.500 4.500 8.200 .8" fill="none" stroke="#505050" stroke-width="1.500"/></svg><div class="th" style="top:17px;height:122px"></div></div></div>
<!-- log -->
<div class="abs" style="left:2px;top:418px;width:781px;height:133px;background:#000;border:1px solid #828282;border-right-color:#e3e3e3"></div>
<div class="abs" style="left:3px;top:419px;width:779px;height:25px;background:#fff"></div>
<div class="abs" style="left:202px;top:419px;width:1px;height:25px;background:#e5e5e5"></div>
<div class="abs" style="left:352px;top:419px;width:1px;height:25px;background:#e5e5e5"></div>
<div class="abs" style="left:762px;top:419px;width:1px;height:25px;background:#e5e5e5"></div>
<div class="lh" style="left:9px">Date</div><div class="lh" style="left:209px">Type</div><div class="lh" style="left:359px">Log</div>
<div class="lr" style="left:9px">2025-11-20 10:44:46</div><div class="lr" style="left:209px">_ERROR</div><div class="lr" style="left:359px">IP[127.0.0.1],DownLoad Fail [Err:UNKNOWN_PROTOCOL] [Url:Patch...</div>
<!-- command -->
<div class="abs" style="left:2px;top:551px;width:680px;height:18px;background:#fff;border:1px solid #7a7a7a"></div>
<div class="abs" style="left:683px;top:551px;width:99px;height:18px;background:#e1e1e1;border:1px solid #adadad;text-align:center;font-weight:700;font-size:12.500px;line-height:16px;letter-spacing:.3px">Command</div>
<div class="abs" style="left:1px;top:571px;width:783px;height:19px;background:#f0f0f0;border-top:1px solid #d7d7d7"></div>
<div class="abs" style="left:4px;top:575px;font-size:12px;line-height:14px;font-family:'Liberation Sans','NanumGothic','Noto Sans CJK KR',sans-serif">준비</div>
<div class="abs" style="left:694px;top:575px;font-size:12px;line-height:14px;color:#000">NUM</div>
<div class="abs" style="left:689px;top:573px;width:1px;height:12px;background:#c8c8c8"></div>
<div class="abs" style="left:727px;top:573px;width:1px;height:12px;background:#c8c8c8"></div><div class="abs" style="left:764px;top:573px;width:1px;height:12px;background:#c8c8c8"></div>
<!-- context menu -->
<div class="abs" style="left:101px;top:63px;width:177px;height:174px;background:#f2f2f2;border:1px solid #a8a8a8;box-shadow:2px 2px 4px rgba(0,0,0,.35)">
<div class="cm" style="left:34px;top:4px">Start</div>
<div class="cm" style="left:34px;top:26px">Start Launcher</div>
<div class="abs" style="left:30px;top:49px;width:143px;height:1px;background:#d7d7d7"></div>
<div class="cm" style="left:34px;top:55px">Stop</div>
<div class="cm" style="left:34px;top:77px">Stop F/B</div>
<div class="cm" style="left:34px;top:99px">Stop Launcher</div>
<div class="abs" style="left:30px;top:122px;width:143px;height:1px;background:#d7d7d7"></div>
<div class="cm" style="left:34px;top:128px">Patch</div>
<div class="cm" style="left:34px;top:150px">Patch Launcher</div>
</div>
<!-- red rect -->
<div class="abs" style="left:1px;top:45px;width:222px;height:27px;border:2px solid #ff1f1f;border-radius:4px"></div>
</div>
<div class="abs bigred" style="left:463px;top:526px;font-size:32.500px;line-height:44px">右键点第一个，选择<span style="font-size:30.500px;margin-left:10px">start</span></div>
<!--/SMEX-->
<!--TASKBAR-->
<div id="tb">
<div class="act"></div>
<div class="ul" style="left:104px;width:40px"></div>
<div class="ul" style="left:153px;width:40px"></div>
<div class="ul" style="left:202px;width:40px"></div>
<div class="ul" style="left:251px;width:40px"></div>
<div class="ul" style="left:296px;width:48px"></div>
<div class="abs" style="left:1275px;top:0;width:1px;height:40px;background:#7f8a9c"></div>
<!-- start -->
<svg class="abs" style="left:16px;top:12px" width="16" height="16" viewBox="0 0 16 16"><path fill="#fff" d="M0 2.2 6.5 1.3V7.5H0zM7.3 1.2 16 0V7.5H7.3zM0 8.3H6.5V14.6L0 13.7zM7.3 8.3H16V16L7.3 14.8z"/></svg>
<!-- pc -->
<svg class="abs" style="left:64px;top:8px" width="25" height="23" viewBox="0 0 28 26"><path d="M8 1 24 5 24 18 8 13z" fill="#2f9bf0" stroke="#bfe3ff" stroke-width="1"/><path d="M17 17 21 18 21 21 17 20z" fill="#d8dde2"/><path d="M14 20 24 22 22 24 12 22z" fill="#c8ced4"/><path d="M2 19 14 22 11 25 0 22z" fill="#eef1f4"/></svg>
<!-- gear -->
<svg class="abs" style="left:114px;top:10px" width="20" height="20" viewBox="0 0 22 22"><g fill="none" stroke="#fff"><circle cx="11" cy="11" r="5.600" stroke-width="2.200"/><g stroke-width="3"><path d="M11 .8v3.6M11 17.600v3.600M.8 11h3.600M17.600 11h3.600M3.800 3.800l2.500 2.500M15.700 15.700l2.500 2.500M18.200 3.800l-2.500 2.500M6.300 15.700l-2.500 2.500"/></g></g></svg>
<!-- phpstudy icon -->
<svg class="abs" style="left:160px;top:7px" width="26" height="27" viewBox="0 0 26 27"><rect x="9" y="2" width="15" height="12" fill="#2f9e3a" stroke="#d8dde2" stroke-width="1.4"/><rect x="1.500" y="9" width="15" height="12" fill="#5a93d6" stroke="#d8dde2" stroke-width="1.600"/><path d="M6 22h7v2H6zM4 24h11v1.600H4z" fill="#c8ced4"/><path d="M9 0l-3 4h2v3h2V4h2z" fill="#f08a1c"/><path d="M19 19a4 4 0 1 1-4 4h2a2 2 0 1 0 2-2z" fill="#e03030"/></svg>
<!-- windows x2 -->
<svg class="abs" style="left:211px;top:12px" width="21" height="16" viewBox="0 0 24 18"><rect x=".5" y=".5" width="23" height="17" fill="#f4f4f4" stroke="#c9c9c9"/><rect x="7" y="3" width="9" height="12" fill="#0a6cdc"/><path d="M2 4h3M2 6.500h3M2 9h3M2 11.500h3M18 4h4M18 6.500h4M18 9h4M18 11.500h3" stroke="#b5b5b5"/></svg>
<svg class="abs" style="left:260px;top:12px" width="21" height="16" viewBox="0 0 24 18"><rect x=".5" y=".5" width="23" height="17" fill="#f4f4f4" stroke="#c9c9c9"/><rect x="7" y="3" width="9" height="12" fill="#0a6cdc"/><path d="M2 4h3M2 6.500h3M2 9h3M2 11.500h3M18 4h4M18 6.500h4M18 9h4M18 11.500h3" stroke="#b5b5b5"/></svg>
<!-- dragon SM -->
<svg class="abs" style="left:308px;top:8px" width="24" height="24" viewBox="0 0 48 48"><use href="#drg" fill="url(#gold)" stroke="#2c1f06" stroke-width="2.500"/><use href="#drg" fill="none" stroke="#e6cf8a" stroke-width="1.200" opacity=".8" transform="translate(1.700 1.600) scale(.93)"/><text x="16" y="46" font-family="Liberation Sans,sans-serif" font-weight="700" font-size="19" fill="#10f010">SM</text></svg>
<!-- tray -->
<svg class="abs" style="left:1064px;top:14px" width="14" height="10" viewBox="0 0 14 10"><path d="M1 8.500 7 2.500 13 8.500" fill="none" stroke="#fff" stroke-width="1.400"/></svg>
<svg class="abs" style="left:1087px;top:11px" width="19" height="18" viewBox="0 0 19 18"><g fill="none" stroke="#fff" stroke-width="1.200"><circle cx="8.500" cy="8.500" r="7"/><ellipse cx="8.500" cy="8.500" rx="3.200" ry="7"/><path d="M1.500 8.500h14M2.500 5h12M2.500 12h12"/></g><circle cx="14" cy="13.500" r="3.800" fill="#1c2c45" stroke="#fff" stroke-width="1.200"/><path d="M11.500 16 16.500 11" stroke="#fff" stroke-width="1.200"/></svg>
<svg class="abs" style="left:1111px;top:11px" width="18" height="18" viewBox="0 0 18 18"><path d="M1.500 6.500h3l4-3.500v12l-4-3.500h-3z" fill="none" stroke="#fff" stroke-width="1.200"/><path d="M10.500 6.500a3.500 3.500 0 0 1 0 5M12.500 4.500a6 6 0 0 1 0 9M14.500 2.500a9 9 0 0 1 0 13" fill="none" stroke="#fff" stroke-width="1.100"/></svg>
<div class="tray" style="left:1135px;top:9px;font-size:15px;line-height:20px;font-family:'Noto Sans CJK SC',sans-serif;font-weight:500">中</div>
<div class="tray" style="left:1150px;top:3px;width:82px;text-align:center;line-height:15px">10:45</div>
<div class="tray" style="left:1150px;top:22px;width:82px;text-align:center;line-height:15px;font-size:13px;letter-spacing:.1px">2025/11/20</div>
<svg class="abs" style="left:1238px;top:10px" width="26" height="24" viewBox="0 0 26 24"><path d="M1.500 1.500h15v12h-9l-3.500 3.500v-3.500h-2.500z" fill="#fff"/><path d="M4 4.500h10M4 7.500h10M4 10.500h7" stroke="#1c2c45" stroke-width="1.100"/><circle cx="17" cy="15.500" r="7" fill="#2b2f3b" stroke="#8a93a3" stroke-width=".8"/><text x="17" y="19.500" text-anchor="middle" font-family="Liberation Sans,sans-serif" font-weight="700" font-size="11" fill="#fff">3</text></svg>
</div>
<!--/TASKBAR-->
<div class="abs" style="left:0;top:0;width:5px;height:5px;background:radial-gradient(circle at 100% 100%,rgba(255,255,255,0) 4.500px,#fff 5.500px)"></div>
<div class="abs" style="left:1275px;top:0;width:5px;height:5px;background:radial-gradient(circle at 0% 100%,rgba(255,255,255,0) 4.500px,#fff 5.500px)"></div>
<div class="abs" style="left:0;top:1019px;width:5px;height:5px;background:radial-gradient(circle at 100% 0%,rgba(255,255,255,0) 4.500px,#fff 5.500px)"></div>
<div class="abs" style="left:1275px;top:1019px;width:5px;height:5px;background:radial-gradient(circle at 0% 0%,rgba(255,255,255,0) 4.500px,#fff 5.500px)"></div>
</body>
</html>
